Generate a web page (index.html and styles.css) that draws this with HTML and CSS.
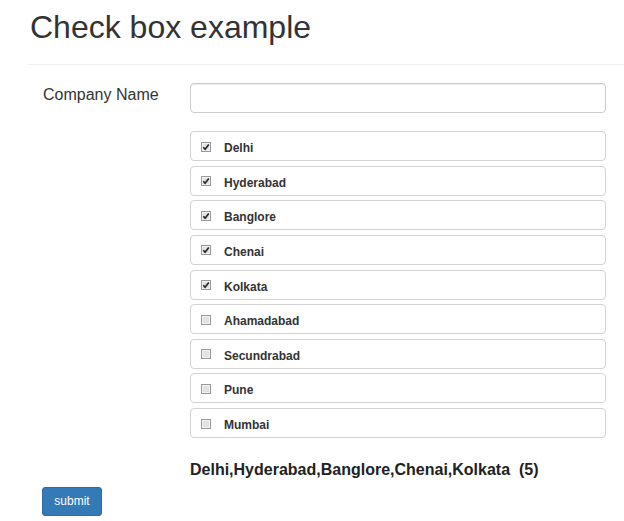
FILE: index.html
```html
<!DOCTYPE html>
<html lang="en">
<head>
<meta charset="utf-8">
<title>Check box example</title>
<link rel="stylesheet" href="styles.css">
</head>
<body>
<div class="page">
  <h1 class="title">Check box example</h1>
  <hr class="divider">
  <form class="form">
    <label class="field-label" for="company">Company Name</label>
    <input class="text-input" id="company" type="text">

    <div class="city-list">
      <label class="city"><svg class="cb" viewBox="0 0 10 10"><rect x="0.5" y="0.5" width="9" height="9" class="cb-box"/><rect x="1.5" y="1.5" width="7" height="7" class="cb-inner"/><path d="M2.3 5.2 L4.1 7.2 L7.8 2.6" class="cb-tick"/></svg><span>Delhi</span></label>
      <label class="city"><svg class="cb" viewBox="0 0 10 10"><rect x="0.5" y="0.5" width="9" height="9" class="cb-box"/><rect x="1.5" y="1.5" width="7" height="7" class="cb-inner"/><path d="M2.3 5.2 L4.1 7.2 L7.8 2.6" class="cb-tick"/></svg><span>Hyderabad</span></label>
      <label class="city"><svg class="cb" viewBox="0 0 10 10"><rect x="0.5" y="0.5" width="9" height="9" class="cb-box"/><rect x="1.5" y="1.5" width="7" height="7" class="cb-inner"/><path d="M2.3 5.2 L4.1 7.2 L7.8 2.6" class="cb-tick"/></svg><span>Banglore</span></label>
      <label class="city"><svg class="cb" viewBox="0 0 10 10"><rect x="0.5" y="0.5" width="9" height="9" class="cb-box"/><rect x="1.5" y="1.5" width="7" height="7" class="cb-inner"/><path d="M2.3 5.2 L4.1 7.2 L7.8 2.6" class="cb-tick"/></svg><span>Chenai</span></label>
      <label class="city"><svg class="cb" viewBox="0 0 10 10"><rect x="0.5" y="0.5" width="9" height="9" class="cb-box"/><rect x="1.5" y="1.5" width="7" height="7" class="cb-inner"/><path d="M2.3 5.2 L4.1 7.2 L7.8 2.6" class="cb-tick"/></svg><span>Kolkata</span></label>
      <label class="city"><svg class="cb" viewBox="0 0 10 10"><rect x="0.5" y="0.5" width="9" height="9" class="cb-box"/><rect x="1.5" y="1.5" width="7" height="7" class="cb-inner"/></svg><span>Ahamadabad</span></label>
      <label class="city"><svg class="cb" viewBox="0 0 10 10"><rect x="0.5" y="0.5" width="9" height="9" class="cb-box"/><rect x="1.5" y="1.5" width="7" height="7" class="cb-inner"/></svg><span>Secundrabad</span></label>
      <label class="city"><svg class="cb" viewBox="0 0 10 10"><rect x="0.5" y="0.5" width="9" height="9" class="cb-box"/><rect x="1.5" y="1.5" width="7" height="7" class="cb-inner"/></svg><span>Pune</span></label>
      <label class="city"><svg class="cb" viewBox="0 0 10 10"><rect x="0.5" y="0.5" width="9" height="9" class="cb-box"/><rect x="1.5" y="1.5" width="7" height="7" class="cb-inner"/></svg><span>Mumbai</span></label>
    </div>

    <p class="result">Delhi,Hyderabad,Banglore,Chenai,Kolkata&nbsp; (5)</p>

    <div class="actions">
      <button class="btn" type="button">submit</button>
    </div>
  </form>
</div>
</body>
</html>
```

FILE: styles.css
```css
html, body {
  margin: 0;
  padding: 0;
  background: #fff;
}

body {
  font-family: "Liberation Sans", Arial, Helvetica, sans-serif;
  color: #333;
}

.page {
  padding: 0 18px 0 28px;
  overflow: hidden;
}

.title {
  margin: 10px 0 0 2px;
  font-size: 32px;
  line-height: 35px;
  font-weight: normal;
  color: #333;
}

.divider {
  margin: 19px -18px 0 0;
  border: 0;
  border-top: 1px solid #eee;
  height: 0;
}

.form {
  display: grid;
  grid-template-columns: 162px 1fr;
  margin-top: 18px;
}

.field-label {
  grid-column: 1;
  padding: 2px 0 0 15px;
  font-size: 16px;
  line-height: 20px;
  color: #333;
}

.text-input {
  grid-column: 2;
  box-sizing: border-box;
  height: 30px;
  margin: 0;
  border: 1px solid #ccc;
  border-radius: 4px;
  box-shadow: inset 0 1px 1px rgba(0, 0, 0, 0.075);
  background: #fff;
}

.city-list {
  grid-column: 2;
  display: flex;
  flex-direction: column;
  gap: 4.625px;
  margin-top: 18px;
}

.city {
  box-sizing: border-box;
  height: 30px;
  display: flex;
  align-items: center;
  padding: 4px 0 0 10px;
  border: 1px solid #d3d3d3;
  border-radius: 4px;
  font-size: 12px;
  font-weight: bold;
  color: #333;
}

.cb {
  width: 10px;
  height: 10px;
  margin: 0 13px 3px 0;
  flex: none;
}

.cb-box {
  fill: none;
  stroke: #999;
  stroke-width: 1;
}

.cb-inner {
  fill: #e2e2e2;
  stroke: #f2f2f2;
  stroke-width: 1;
}

.cb-tick {
  fill: none;
  stroke: #222;
  stroke-width: 1.6;
}

.result {
  grid-column: 2;
  margin: 22px 0 0 0;
  font-size: 16px;
  line-height: 20px;
  font-weight: bold;
  color: #222;
}

.actions {
  grid-column: 1;
  padding-left: 14px;
  margin-top: 7px;
}

.btn {
  box-sizing: border-box;
  height: 29px;
  width: 60px;
  padding: 0;
  border: 1px solid #2e6da4;
  border-radius: 3px;
  background: #337ab7;
  color: #fff;
  font-family: "Liberation Sans", Arial, Helvetica, sans-serif;
  font-size: 12px;
  line-height: 27px;
}
```
